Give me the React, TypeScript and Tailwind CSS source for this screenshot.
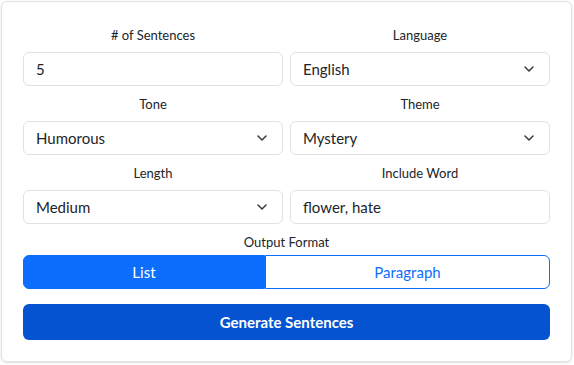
const font = { fontFamily: 'Lato, "Noto Sans", sans-serif' }

function Chevron() {
  return (
    <svg width="10" height="6" viewBox="0 0 10 6" fill="none" className="text-[#343a40]">
      <path d="M1 1L5 5L9 1" stroke="currentColor" strokeWidth="1.5" strokeLinecap="round" strokeLinejoin="round" />
    </svg>
  )
}

function Label({ text }: { text: string }) {
  return <div className="text-center text-[13px] leading-5 text-[#212529] mb-[7px]">{text}</div>
}

function SelectBox({ value }: { value: string }) {
  return (
    <div className="h-[34px] flex items-center justify-between pl-3 pr-[15px] bg-white border border-[#dee2e6] rounded-md text-[15px] text-[#212529]">
      <span>{value}</span>
      <Chevron />
    </div>
  )
}

function TextBox({ value }: { value: string }) {
  return (
    <div className="h-[34px] flex items-center px-3 bg-white border border-[#dee2e6] rounded-md text-[15px] text-[#212529]">
      {value}
    </div>
  )
}

export default function App() {
  return (
    <div className="w-[574px] h-[365px] bg-white p-[1px]" style={font}>
      <div className="w-[571px] h-[361px] border border-[#dee2e6] rounded-md shadow-sm px-[21px] pt-[23px]">
        <div className="grid grid-cols-2 gap-x-[7px] gap-y-[8px]">
          <div>
            <Label text="# of Sentences" />
            <TextBox value="5" />
          </div>
          <div>
            <Label text="Language" />
            <SelectBox value="English" />
          </div>
          <div>
            <Label text="Tone" />
            <SelectBox value="Humorous" />
          </div>
          <div>
            <Label text="Theme" />
            <SelectBox value="Mystery" />
          </div>
          <div>
            <Label text="Length" />
            <SelectBox value="Medium" />
          </div>
          <div>
            <Label text="Include Word" />
            <TextBox value="flower, hate" />
          </div>
        </div>

        <div className="mt-[8px] text-center text-[13px] leading-5 text-[#212529] mb-[3px]">Output Format</div>
        <div className="flex h-[34px]">
          <button className="flex-auto px-3 bg-[#0d6efd] text-white text-[15px] rounded-l-md border border-[#0d6efd]">
            List
          </button>
          <button className="flex-auto px-3 bg-white text-[#0d6efd] text-[15px] rounded-r-md border border-[#0d6efd]">
            Paragraph
          </button>
        </div>

        <button className="mt-[15px] w-full h-[36px] bg-[#0553d0] text-white text-[15px] font-bold rounded-md">
          Generate Sentences
        </button>
      </div>
    </div>
  )
}
